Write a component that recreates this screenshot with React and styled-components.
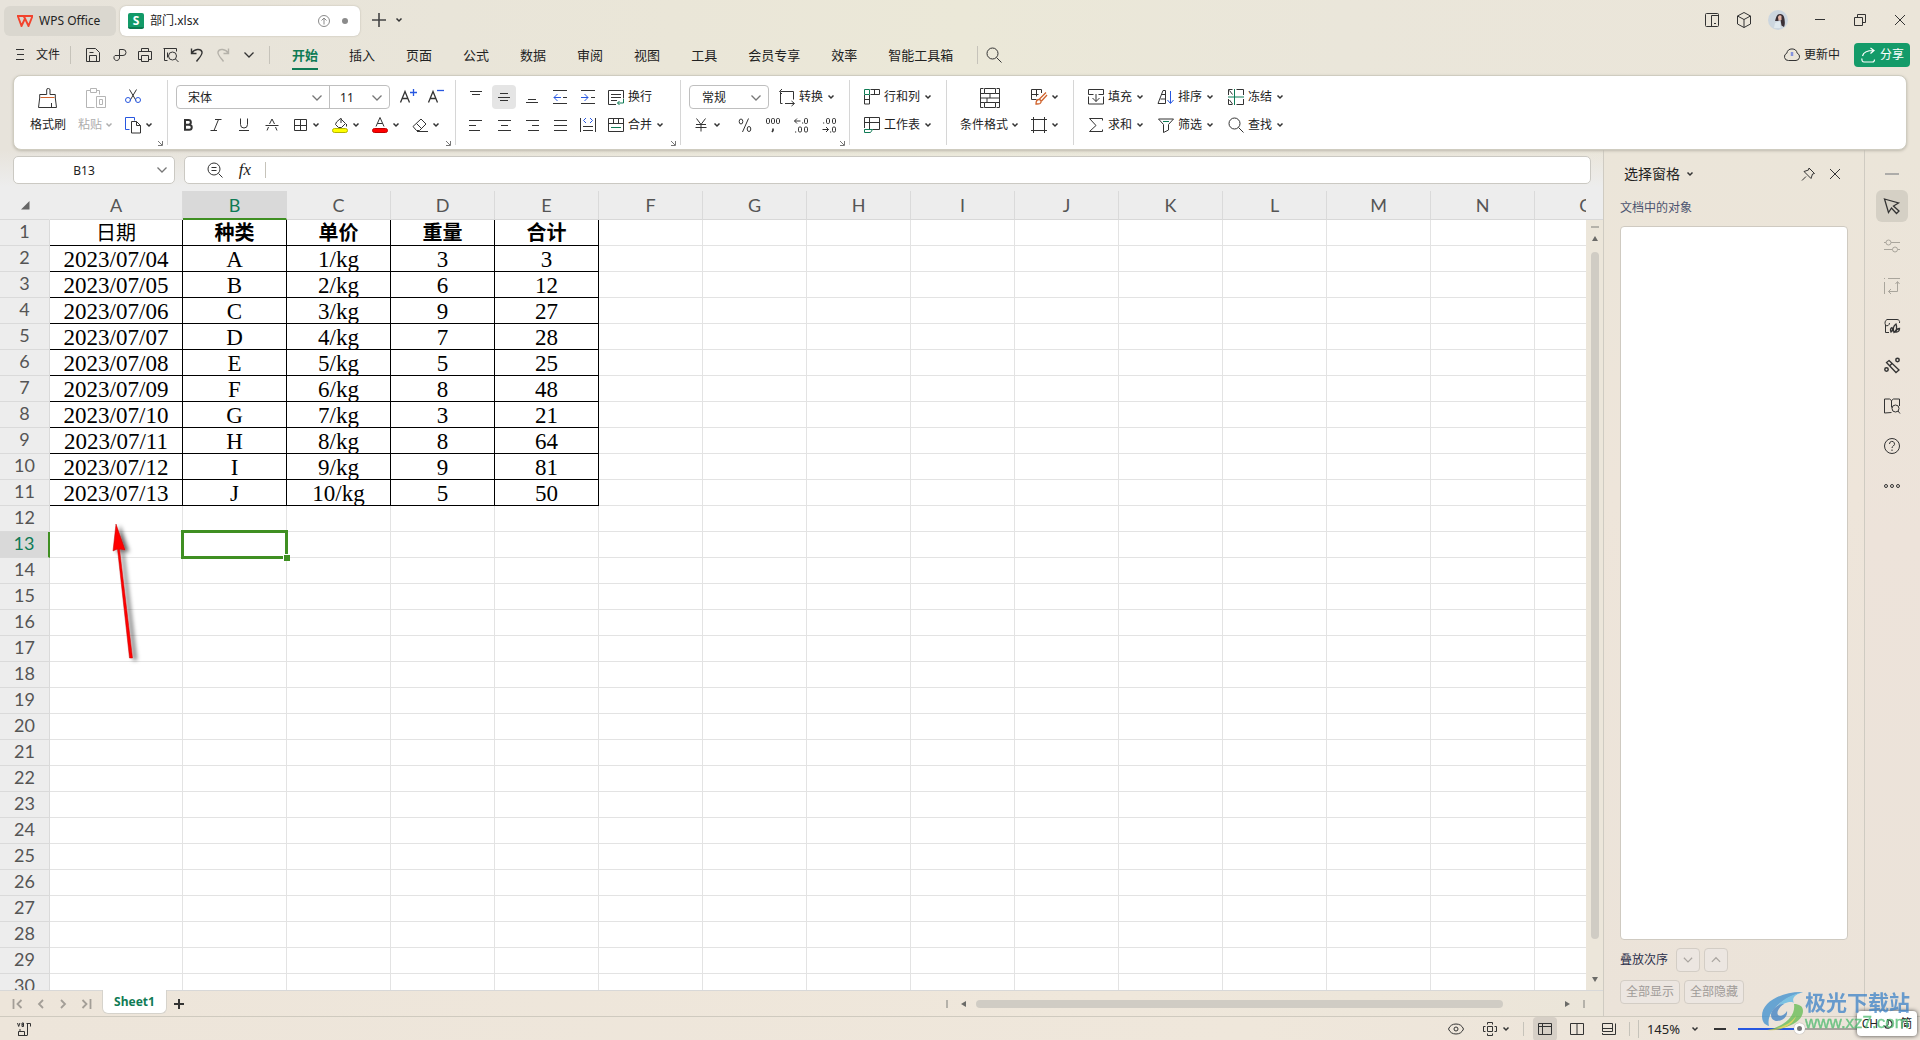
import React, { useState } from "react";
import styled, { createGlobalStyle, css } from "styled-components";

const INK = "#333333";
const GREEN = "#0f7b55";
const BLUE = "#2757e0";
const ORANGE = "#d0642e";
const UI_FONT = `"Noto Sans", "Noto Sans CJK SC", sans-serif`;

const GlobalStyle = createGlobalStyle`
  * { box-sizing: border-box; }
  body { margin: 0; overflow: hidden; font-family: ${UI_FONT}; color: #222; }
  button, input, select { font: inherit; color: inherit; }
  button { padding: 0; border: 0; background: none; cursor: default; }
  table { border-collapse: separate; border-spacing: 0; }
`;

/* ---------- icons ---------- */

const Glyph = styled.svg`
  display: block;
  flex: none;
  fill: none;
  stroke: ${(p) => p.$color || INK};
  stroke-width: ${(p) => p.$weight || 1};
`;

const Icon = ({ name, size = 24, color, weight }) => (
  <Glyph width={size} height={size} viewBox="0 0 24 24" $color={color} $weight={weight} aria-hidden="true">
    {ICONS[name]}
  </Glyph>
);

const P = (d, extra) => <path d={d} {...extra} />;

const ICONS = {
  menu: P("M4 6.5h8M5 11.5h7M4 16.5h8"),
  save: (
    <>
      {P("M5.5 5.5h9l4 4v9h-13z")}
      {P("M8.5 18.5v-6h7v6M8.5 9.5h4")}
    </>
  ),
  pdf: P("M8 12.500h8a3 3 0 0 0 0-6h-3.500v8.500a2.800 2.800 0 1 1-4.500-2.500"),
  print: (
    <>
      {P("M8.500 8.500v-3h7v3M8.500 16.500h-3v-8h13v8h-3M8.500 12.500h7v6h-7z")}
    </>
  ),
  preview: (
    <>
      {P("M8.500 17.500h-3v-12h12v3M4.500 5.500h3M8.500 9.500v5")}
      <circle cx="13.500" cy="13" r="4" />
      {P("M16.500 16l3 3")}
    </>
  ),
  undo: P("M6.500 5.500v5h5M7 10c2-4 9-5 10-1 .6 3-3 6-5.500 9.500", { strokeWidth: 1.4 }),
  redo: P("M17.500 5.500v5h-5M17 10c-2-4-9-5-10-1-.6 3 3 6 5.500 9.500", { strokeWidth: 1.4 }),
  down: P("M7.500 9.500l4.500 4.500 4.500-4.500", { strokeWidth: 1.3 }),
  up: P("M7.500 14l4.500-4.500 4.500 4.500", { strokeWidth: 1.3 }),
  search: (
    <>
      <circle cx="10.500" cy="10.500" r="5.500" />
      {P("M14.500 14.500l5 5")}
    </>
  ),
  plus: P("M12 5v14M5 12h14", { strokeWidth: 1.600 }),
  upload: (
    <>
      <circle cx="12" cy="12" r="5.500" />
      {P("M12 15.500v-6M9.500 11.500l2.500-2.500 2.500 2.500")}
    </>
  ),
  dual: (
    <>
      <rect x="5.500" y="5.500" width="13" height="13" rx="1" />
      {P("M11.500 18.500v-11h7M14 15.500h2")}
    </>
  ),
  cube: P("M12 4.500l6.500 3.500v8l-6.500 3.500-6.500-3.500v-8zM5.500 8l6.500 3.500 6.500-3.500M12 11.500v8"),
  minimize: P("M7 11.500h10"),
  restore: P("M6.500 9.500h8v8h-8zM9.500 9.500v-3h8v8h-3"),
  close: P("M7 7l10 10M17 7l-10 10"),
  cloud: (
    <>
      {P("M8.500 17.500h7.500a3.800 3.800 0 0 0 1.200-7.300 5.300 5.300 0 0 0-10.400 0 3.800 3.800 0 0 0 1.700 7.300z")}
      {P("M12 9v4", { stroke: "#8493dd", strokeWidth: 2.500 })}
    </>
  ),
  share: (
    <>
      {P("M6 15.500c-.5 2 .5 3.500 2 3.500h8.500c1.200 0 2-1 2-2.500M6.500 13c1-4 5-5.500 11-5.500M14.500 5l3.500 2.500-3.500 3", { strokeWidth: 1.2 })}
    </>
  ),
  brush: (
    <>
      {P("M12.500 2.500a1.500 1.500 0 0 0-1.800 1.500v4.500h-7v3.500l-1.200 9.500h18l-1.200-9.500v-3.500h-5.300v-4.500a1.500 1.500 0 0 0-1.500-1.500z")}
      {P("M4.500 11.500h14", { stroke: ORANGE })}
      {P("M15.500 17v4.500")}
    </>
  ),
  paste: (
    <>
      {P("M6.500 4.500h-4v17h8M15.500 8.500v-4h-3M6.500 2.500h6v4h-6zM12.500 10.500h9v11h-9zM15.500 13.500h3v5h-3z")}
    </>
  ),
  cut: (
    <>
      {P("M8.500 4.500l6.500 11M15.500 4.500l-6.500 11")}
      <circle cx="7" cy="15" r="2.500" stroke={BLUE} />
      <circle cx="17" cy="15" r="2.500" stroke={BLUE} />
    </>
  ),
  copy: (
    <>
      {P("M8.500 16.500h-4v-12h9v3", { stroke: BLUE })}
      {P("M10.500 8.500h5l4 4v7.500h-9zM15.500 8.500v4h4")}
    </>
  ),
  bigger: (
    <>
      {P("M5.500 17.500l4.500-11 4.500 11M7 13.500h6", { strokeWidth: 1.300 })}
      {P("M15 7.500h7M18.500 4v7", { stroke: BLUE, strokeWidth: 1.300 })}
    </>
  ),
  smaller: (
    <>
      {P("M5.500 17.500l4.500-11 4.500 11M7 13.500h6", { strokeWidth: 1.300 })}
      {P("M14 5.500h7", { stroke: BLUE, strokeWidth: 1.300 })}
    </>
  ),
  bold: P("M9 7h3.500a2.300 2.300 0 0 1 0 4.700H9zM9 11.700h4.200a2.500 2.500 0 0 1 0 5.100H9z", { strokeWidth: 2 }),
  italic: P("M11 6.500h6.500M6.500 17.500h6.500M14.500 6.500l-4.500 11"),
  underline: P("M8.500 5.500v6a3.500 3.500 0 0 0 7 0v-6M7 17.500h10"),
  strike: P("M5.500 12.500h13M9.500 11l2.500-5 2.500 5M8.500 14l-1.500 3.500M15.500 14l1.500 3.500"),
  borders: P("M6.500 6.500h12v11h-12zM12.500 6.500v11M6.500 12.500h12"),
  fill: (
    <>
      {P("M8.500 9l4-3.500 5 5-4 4h-3l-3-3zM13 5v5M18.500 11v2.500")}
      <rect x="4.500" y="15.500" width="15" height="4" rx="2" fill="#ffff00" stroke="#b5b500" />
    </>
  ),
  fontColor: (
    <>
      {P("M8 13.500l4-9 4 9M9.500 10.500h5")}
      <rect x="4.500" y="15.500" width="15" height="4" rx="2" fill="#ff0000" stroke="#c00000" />
    </>
  ),
  eraser: P("M5 13.500l8-7.500 5 5-6.500 6.500h-3zM8.500 10.500l5 5M9 18.500h11"),
  alignTop: P("M6 6.500h12M8 9.500h8"),
  alignMiddle: P("M8 8.500h8M6 12.500h12M8 15.500h8"),
  alignBottom: P("M8 14.500h8M6 17.500h12"),
  outdent: (
    <>
      {P("M5 5.500h14M15 12.500h4M5 18.500h14")}
      {P("M13 12.500h-7M9.500 9l-3.500 3.500 3.500 3.500", { stroke: BLUE })}
    </>
  ),
  indent: (
    <>
      {P("M5 5.500h14M15 12.500h4M5 18.500h14")}
      {P("M5 12.500h7M8.500 9l3.500 3.500-3.500 3.500", { stroke: BLUE })}
    </>
  ),
  left: P("M5 7.500h13M5 12.500h7M5 17.500h11"),
  center: P("M6 7.500h13M9 12.500h7M6 17.500h13"),
  right: P("M6 7.500h13M12 12.500h7M8 17.500h11"),
  justify: P("M6 7.500h13M6 12.500h13M6 17.500h13"),
  distribute: (
    <>
      {P("M4.500 5v14M19.500 5v14M7 13.500h10M7 17.500h10")}
      {P("M10 5l-2.500 2.500 2.500 2.500M14 5l2.500 2.500-2.500 2.500", { stroke: BLUE })}
    </>
  ),
  wrap: (
    <>
      {P("M12 19.500h-7.500v-14h15v8M7 9.500h10M7 12.500h10M7 15.500h6")}
      {P("M19.500 14v4h-6M15.500 16l-2 2 2 2", { stroke: GREEN })}
    </>
  ),
  merge: (
    <>
      {P("M4.500 5.500h15v13h-15zM4.500 10.500h15M9.500 5.500v5M14.500 5.500v5")}
      {P("M7 14.500h10", { stroke: GREEN })}
    </>
  ),
  convert: P("M7.500 18.500h-2v-12h13v8M7 4l-2.500 2.500 2.500 2.500M10 18.500h9M16.500 16l3 2.500-3 2.500"),
  yen: P("M7.500 5.500l4.500 6 4.500-6M7 11.500h10M6.500 14.500h11M12 11.500v7"),
  percent: (
    <>
      <ellipse cx="8" cy="8.500" rx="1.800" ry="2.500" />
      <ellipse cx="16" cy="16" rx="1.800" ry="2.500" />
      {P("M15.500 5.500l-6 13.500")}
    </>
  ),
  thousands: (
    <>
      <rect x="5.500" y="5.500" width="3" height="5" rx="1.200" />
      <rect x="10.500" y="5.500" width="3" height="5" rx="1.200" />
      <rect x="15.500" y="5.500" width="3" height="5" rx="1.200" />
      {P("M12 15.500v2l-1 1.500", { strokeWidth: 1.600 })}
    </>
  ),
  decInc: (
    <>
      {P("M5.500 8h6M8 5.500l-2.500 2.500 2.500 2.500M13 10h1.200M6 19h1.200")}
      <rect x="15.500" y="5.500" width="3" height="5" rx="1.200" />
      <rect x="9.500" y="14" width="3" height="5" rx="1.200" />
      <rect x="15.500" y="14" width="3" height="5" rx="1.200" />
    </>
  ),
  decDec: (
    <>
      {P("M5.500 16.500h6M9 14l2.500 2.500-2.500 2.500M13 19h1.200M6 10h1.200")}
      <rect x="9.500" y="5.500" width="3" height="5" rx="1.200" />
      <rect x="15.500" y="5.500" width="3" height="5" rx="1.200" />
      <rect x="15.500" y="14" width="3" height="5" rx="1.200" />
    </>
  ),
  rowsCols: (
    <>
      {P("M10.500 4.500h9v5h-9M14.500 4.500v5M4.500 10v9h5v-9M4.500 14.500h5")}
      {P("M4.500 4.500h5v5h-5z", { stroke: GREEN })}
    </>
  ),
  worksheet: (
    <>
      {P("M4.500 15v-10.500h15v12h-7M4.500 9.500h15M9.500 4.500v12")}
      {P("M4.500 16.500h8l-2 3h-6z", { stroke: GREEN })}
    </>
  ),
  condFormat: P("M5.500 2.500h-3v19h3M18.500 2.500h3v19h-3M6.500 2.500h11v5h-11zM6.500 16.500h11v5h-11zM2.500 7.500h4M17.500 7.500h4M2.500 12h19M12 7.500v4.500M2.500 16.500h4M17.500 16.500h4M9 12v4.500"),
  cellStyle: (
    <>
      {P("M14.500 8v-3.500h-10v10h5M9.500 4.500v7M4.500 9.500h7")}
      {P("M9 19c0-3 1-4.500 3-4.500s3 2.500 1 4c-1 .6-2.500.5-4 .5zM12.500 14l6.500-6.500M14.500 16l5.500-6", { stroke: ORANGE, strokeWidth: 1.300 })}
    </>
  ),
  frame: P("M6.500 4v16M17.500 4v16M4 6.500h16M4 17.500h16"),
  fillDown: P("M9.500 9.500h-5v-5h15v5h-5M4.500 11.500v7.500h15v-7.500M12 9v7.500M8.500 13l3.500 3.500 3.500-3.500"),
  sum: P("M18.500 7.500v-2h-13l6.500 7-6.500 6h13v-2"),
  sort: (
    <>
      {P("M4 18.500l5-13h2.500v13M4 18.500h7.500M7.500 9.500h4M6.500 14h5")}
      {P("M16.500 6v12M13.500 15l3 3.500 3-3.500", { stroke: BLUE })}
    </>
  ),
  filter: (
    <>
      {P("M9.500 19.500v-8l-5-5.500h15l-5 5.500v5.500z")}
      {P("M9 8.500h6", { stroke: GREEN })}
    </>
  ),
  freeze: (
    <>
      {P("M4.500 10v-5.500h4M12.500 4.500h7v5.500M4.500 14v5.500h4M12.500 19.500h7v-5.500M5.500 5.500l3 4M5.500 15l3 4")}
      {P("M10.500 4v16M4 12h16", { stroke: GREEN })}
    </>
  ),
  zoomOut: (
    <>
      <circle cx="11" cy="11" r="6" />
      {P("M8.500 9.500h5M8.500 12.500h5M15.500 15.500l4 4")}
    </>
  ),
  pin: P("M6 18.500l4-4M13 6l5.500 5.500-2 .5-1.500 4.500-7-7 4.500-1.500z"),
  dash: P("M5 12h14", { strokeWidth: 1.500 }),
  cursor: P("M4.500 5l14 4-5 3 5.500 5-2.500 2.500-5-5.500-3 4.500z", { strokeWidth: 1.300 }),
  sliders: (
    <>
      {P("M4 8.500h2M11 8.500h9M4 15.500h8.500M17.500 15.500h2.500")}
      <circle cx="8.500" cy="8.500" r="2.500" />
      <circle cx="15" cy="15.500" r="2.500" />
    </>
  ),
  crop: P("M4.500 8v12M8 4.500h12M4.500 4v1M17.500 8v9.500h-9M15.500 10l2-2.500 2 2.500M11 15l-2.500 2.500 2.500 2.500"),
  stylePanel: (
    <>
      {P("M9 18.500h-3.500v-7.500c-1-2-.5-4.500 1.500-5.500h10c2 0 3 1.500 2.500 3.500M5.500 11.500c2 1 4-.5 4-2.500")}
      {P("M11 18c-1-2.500 0-4 1-4.500 1 1.500 1 3-1 4.500zM14 18.500c-1.500-4 0-7 2-8.500 1 2.500 1 6-2 8.500zM15.500 18c1-3 2.500-3.500 4-3.500 0 2-1 4-4 3.500z", { strokeWidth: 1.300 })}
    </>
  ),
  wand: (
    <>
      {P("M9 6.500l10 9.500-3 2.500-9.500-10zM9.500 12l2.500-2.500", { strokeWidth: 1.300 })}
      <circle cx="17.500" cy="6" r="1.700" strokeWidth="1.500" />
      <circle cx="6.500" cy="15.500" r="1.700" strokeWidth="1.500" />
    </>
  ),
  book: (
    <>
      {P("M11.500 18.500l-7 .5v-14h5l2 1.500 2-1.500h6v7M11.500 6.500v7")}
      <circle cx="15.500" cy="14.500" r="3.500" />
      {P("M18 17l2 2.500")}
    </>
  ),
  help: (
    <>
      <circle cx="12" cy="12" r="7.500" />
      {P("M9.500 10a2.500 2.500 0 1 1 3.800 2c-.8.6-1.300 1-1.300 2M12 15.500v1.500")}
    </>
  ),
  more: (
    <>
      <circle cx="6" cy="12" r="1.500" />
      <circle cx="12" cy="12" r="1.500" />
      <circle cx="18" cy="12" r="1.500" />
    </>
  ),
  first: P("M6.500 7v10M14.500 8l-4 4 4 4", { strokeWidth: 1.800 }),
  prev: P("M14 8l-4 4 4 4", { strokeWidth: 1.800 }),
  next: P("M10 8l4 4-4 4", { strokeWidth: 1.800 }),
  last: P("M17.500 7v10M9.500 8l4 4-4 4", { strokeWidth: 1.800 }),
  addSheet: P("M12 7v10M7 12h10", { strokeWidth: 2 }),
  macro: (
    <>
      {P("M5.500 6l1.200 3.500 1.200-3.500M10 9.500v-3.500h1.500v3.500zM10 7.700h2M14.500 6.500h4v3M15.500 6.500v11.500M6.500 18.500h9M6.500 14.500h6v4h-6zM8 14.500v-2.500")}
    </>
  ),
  eye: (
    <>
      {P("M4.500 12c1.500-3.500 4-5 7.500-5s6 1.500 7.500 5c-1.500 3.500-4 5-7.500 5s-6-1.500-7.500-5z")}
      <circle cx="12" cy="12" r="2" />
    </>
  ),
  target: P("M9.500 9.500h5v5h-5zM9.500 7.500v-2h5v2M9.500 16.500v2h5v-2M7.500 9.500h-2v5h2M16.500 9.500h2v5h-2"),
  gridView: P("M5.500 6.500h13v11h-13zM9.500 6.500v11M5.500 9.500h13"),
  pageView: P("M5.500 6.500h13v11h-13zM12 6.500v11"),
  readView: P("M5.500 6.500h10v8h-10zM18.500 6.500v11h-13v-1.500M5.500 11.500h10"),
  minus: P("M6 12h12", { strokeWidth: 2 }),
  moon: P("M10 5.500c7 1 9 9 3 12-3 1.500-6 .5-7.500-2 5 .5 7-4 4.500-10z", { strokeWidth: 1.800 }),
};

const Chevron = ({ color = INK }) => (
  <Glyph width="8" height="8" viewBox="0 0 8 8" $color={color} $weight={1.5} aria-hidden="true">
    <path d="M1.500 2.500L4 5l2.500-2.500" />
  </Glyph>
);

const Triangle = ({ dir }) => {
  const d = { up: "M4 1l3 5H1z", down: "M4 7L1 2h6z", left: "M1 4l5-3v6z", right: "M7 4L2 1v6z" }[dir];
  return (
    <Glyph width="8" height="8" viewBox="0 0 8 8" $color="none" aria-hidden="true">
      <path d={d} fill="#6b6b68" />
    </Glyph>
  );
};

const WpsLogo = () => (
  <Glyph width="16" height="12" viewBox="0 0 16 12" $color="#f2432d" $weight={1.9}>
    <path d="M0 1h15.500L11.500 11 8 3.500 4.500 11 1 1.500M8 3.500L6.500 1" />
  </Glyph>
);

/* ---------- frame ---------- */

const Window = styled.div`
  position: relative;
  display: flex;
  flex-direction: column;
  height: 100vh;
  overflow: hidden;
  background: linear-gradient(90deg, #e7e3db 0, #eae6d8 35%, #ebe8d8 50%, #eae6da 70%, #ebe5d9 100%);
  font-size: 12px;
  line-height: 16px;
`;

const TitleBar = styled.header`
  display: flex;
  align-items: flex-start;
  height: 37px;
  padding: 6px 0 0 4px;
`;

const DocTab = styled.button`
  display: flex;
  align-items: center;
  gap: 6px;
  height: 30px;
  border-radius: 6px;
  margin-right: 4px;
  text-align: left;
  ${(p) =>
    p.$active
      ? css`width: 240px; padding: 0 12px 0 8px; background: #fff; box-shadow: 0 0 2px #b7b3a8;`
      : css`width: 112px; padding: 0 13px; background: #dad7cf;`}
`;

const Grow = styled.span`
  flex: 1;
`;

const SheetBadge = styled.span`
  width: 16px;
  height: 16px;
  border-radius: 2px;
  background: #129a68;
  border-bottom: 2px solid #0b7a50;
  color: #fff;
  font-size: 12px;
  line-height: 15px;
  font-weight: 700;
  text-align: center;
`;

const Dot = styled.span`
  width: 6px;
  height: 6px;
  border-radius: 50%;
  background: #8b8b8b;
`;

const TitleTools = styled.div`
  display: flex;
  align-items: center;
  height: 28px;
`;

const ToolButton = styled.button`
  display: flex;
  align-items: center;
  justify-content: center;
  flex: none;
  width: ${(p) => p.$w || 24}px;
  height: 24px;
  border-radius: 4px;
  background: ${(p) => (p.$active ? "#e5e5e5" : "transparent")};
`;

const AvatarButton = styled(ToolButton)`
  margin: 0 10px 0 2px;
`;

const Avatar = () => (
  <svg width="20" height="20" viewBox="0 0 20 20" aria-hidden="true">
    <circle cx="10" cy="10" r="10" fill="#ccd6df" />
    <path d="M7 11c1-2 1-7 5-7 3-.3 4 2 4.500 5 .5 4 .5 6-.5 8l-2.500-1.500-1-5.500-3 1z" fill="#3a3036" />
    <path d="M10 7c1-2 2.500-2 3.500-1v4l-3 .5z" fill="#e7b7a8" />
    <path d="M7 13l5-2 .5 7H6z" fill="#dfe8ee" />
  </svg>
);

const MenuBar = styled.nav`
  display: flex;
  align-items: center;
  height: 38px;
  padding: 0 10px 2px 12px;
`;

const FileButton = styled.button`
  display: flex;
  align-items: center;
  height: 24px;
`;

const Rule = styled.span`
  flex: none;
  width: 1px;
  height: ${(p) => p.$h || 18}px;
  margin: 0 ${(p) => p.$m || 0}px;
  background: #c6c3ba;
`;

const QuickTools = styled.div`
  display: flex;
  gap: 2px;
`;

const MenuTabs = styled.div`
  display: flex;
  gap: 31px;
  margin: 0 20px 0 14px;
`;

const MenuTab = styled.button`
  height: 26px;
  margin-top: 4px;
  padding-bottom: 2px;
  font-size: 13px;
  line-height: 20px;
  border-bottom: 2px solid ${(p) => (p.$active ? GREEN : "transparent")};
  color: ${(p) => (p.$active ? GREEN : "#222")};
  font-weight: ${(p) => (p.$active ? 700 : 400)};
`;

const SyncState = styled.button`
  display: flex;
  align-items: center;
  margin-right: 14px;
`;

const ShareButton = styled.button`
  display: flex;
  align-items: center;
  height: 24px;
  padding: 0 6px 0 2px;
  border-radius: 4px;
  background: #149b69;
  color: #fff;
`;

/* ---------- ribbon ---------- */

const Ribbon = styled.section`
  display: flex;
  height: 75px;
  margin: 0 13px;
  padding: 4px 0;
  background: #fff;
  border: 1px solid #cfccc0;
  border-radius: 8px;
  box-shadow: 0 1px 3px #bdb9ad;
  z-index: 1;
`;

const Group = styled.div`
  position: relative;
  display: flex;
  padding: 5px ${(p) => p.$r}px 0 ${(p) => p.$l}px;
  border-right: ${(p) => (p.$last ? 0 : 1)}px solid #d6d6d6;
`;

const Rows = styled.div`
  display: flex;
  flex-direction: column;
  gap: 4px;
`;

const Row = styled.div`
  display: flex;
  align-items: center;
  gap: ${(p) => p.$gap ?? 4}px;
  height: 24px;
`;

const LauncherButton = styled.button`
  position: absolute;
  right: 3px;
  bottom: -2px;
`;

const Launcher = ({ label }) => (
  <LauncherButton aria-label={label}>
    <Glyph width="8" height="8" viewBox="0 0 8 8" $color="#777">
      <path d="M2 2l4 4M6.500 2v4.500h-4.500" />
    </Glyph>
  </LauncherButton>
);

const BigButton = styled.button`
  display: flex;
  flex-direction: column;
  align-items: center;
  gap: 8px;
  height: 52px;
  padding-top: 1px;
  margin-right: ${(p) => p.$gap || 0}px;
  color: ${(p) => (p.disabled ? "#adadad" : "#222")};
`;

const BigLabel = styled.span`
  display: flex;
  align-items: center;
  gap: 3px;
  line-height: 14px;
`;

const ActionButton = styled.button`
  display: flex;
  align-items: center;
  height: 24px;
  svg + svg { margin-right: 4px; }
  span { margin-right: 4px; }
`;

const Action = ({ icon, text, menu, label }) => (
  <ActionButton aria-label={label}>
    <Icon name={icon} />
    {text && <span>{text}</span>}
    {menu && <Chevron />}
  </ActionButton>
);

const Tool = ({ icon, label, active, ...rest }) => (
  <ToolButton aria-label={label} title={label} $active={active}>
    <Icon name={icon} {...rest} />
  </ToolButton>
);

const FontBoxes = styled.div`
  display: flex;
  height: 24px;
  border: 1px solid #bfbfbf;
  border-radius: 4px;
  margin-right: 1px;
`;

const PickWrap = styled.label`
  display: grid;
  grid-template-columns: 1fr 24px;
  align-items: center;
  width: ${(p) => p.$w}px;
  height: ${(p) => (p.$boxed ? 24 : 22)}px;
  border: ${(p) => (p.$boxed ? "1px solid #bfbfbf" : "0")};
  border-radius: 4px;
  & + & { border-left: 1px solid #bfbfbf; border-radius: 0; }
  svg { grid-area: 1 / 2; pointer-events: none; }
`;

const Pick = styled.select`
  grid-area: 1 / 1 / 2 / 3;
  width: 100%;
  height: 100%;
  padding: 0 0 0 ${(p) => p.$pad}px;
  border: 0;
  background: transparent;
  appearance: none;
  outline: none;
`;

const Dropdown = ({ label, value, width, pad, boxed }) => (
  <PickWrap $w={width} $boxed={boxed}>
    <Pick aria-label={label} $pad={pad} defaultValue={value}>
      <option>{value}</option>
    </Pick>
    <Icon name="down" color="#777" />
  </PickWrap>
);

/* ---------- body ---------- */

const Body = styled.main`
  display: flex;
  flex: 1;
  min-height: 0;
`;

const Work = styled.div`
  display: flex;
  flex-direction: column;
  flex: 1;
  min-width: 0;
`;

const FormulaBar = styled.div`
  display: flex;
  gap: 9px;
  height: 41px;
  padding: 6px 12px 7px 13px;
  background: linear-gradient(180deg, rgba(237, 237, 237, 0) 0, #ededed 90%);
`;

const BarBox = styled.div`
  display: flex;
  align-items: center;
  background: #fff;
  border: 1px solid #cbc9c3;
  border-radius: 5px;
  ${(p) => (p.$w ? css`width: ${p.$w}px;` : css`flex: 1; padding-left: 18px;`)}
`;

const BarInput = styled.input`
  flex: 1;
  min-width: 0;
  height: 24px;
  border: 0;
  outline: none;
  background: transparent;
  text-align: ${(p) => p.$align || "left"};
  padding-left: ${(p) => p.$pad || 0}px;
`;

const Fx = styled.button`
  width: 28px;
  margin: 0 6px 0 4px;
  font: italic 17px/22px "Liberation Serif", serif;
`;

const SheetArea = styled.div`
  display: flex;
  flex: 1;
  min-height: 0;
`;

const GridView = styled.div`
  flex: 1;
  min-width: 0;
  overflow: hidden;
  background: #fff;
`;

const Grid = styled.table`
  table-layout: fixed;
  width: 1639px;
`;

const ColHead = styled.th`
  height: 29px;
  padding: 0;
  background: ${(p) => (p.$active ? "#d9d9d9" : "#ededed")};
  border-right: 1px solid ${(p) => (p.$active ? "#d9d9d9" : "#dadada")};
  border-bottom: ${(p) => (p.$active ? "2px solid #3f8f22" : "1px solid #d8d8d8")};
  color: ${(p) => (p.$active ? GREEN : "#555")};
  font: 400 18px/24px Lato, sans-serif;
`;

const Corner = styled(ColHead)`
  border-right-color: #ededed;
  svg { display: block; margin: 0 0 0 20px; }
`;

const RowHead = styled.th`
  height: 26px;
  padding: 0 0 3px;
  background: ${(p) => (p.$active ? "#d9d9d9" : "#ededed")};
  border-right: ${(p) => (p.$active ? "2px solid #3f8f22" : "1px solid #dadada")};
  border-bottom: 1px solid #dadada;
  color: ${(p) => (p.$active ? GREEN : "#555")};
  font: 400 18px/22px Lato, sans-serif;
`;

const Cell = styled.td`
  position: relative;
  height: 26px;
  padding: 2px 0 0;
  border-right: 1px solid ${(p) => (p.$ruled ? "#000" : "#e3e3e3")};
  border-bottom: 1px solid ${(p) => (p.$ruled ? "#000" : "#e3e3e3")};
  color: #000;
  font-family: "Liberation Serif", "Noto Sans CJK SC", serif;
  font-size: ${(p) => (p.$head ? 20 : 23)}px;
  line-height: 23px;
  font-weight: ${(p) => (p.$bold ? 700 : 400)};
  text-align: center;
  white-space: nowrap;
  ${(p) =>
    p.$selected &&
    css`
      &::before { content: ""; position: absolute; inset: -2px; border: 3px solid #3f8f22; z-index: 1; }
      &::after { content: ""; position: absolute; right: -4px; bottom: -4px; width: 6px; height: 6px;
        background: #3f8f22; border: 1px solid #fff; border-width: 1px 0 0 1px; z-index: 2; }
    `}
`;

const Arrow = styled.svg`
  position: absolute;
  left: 54px;
  top: 18px;
  z-index: 3;
  overflow: visible;
`;

const VScroll = styled.div`
  display: flex;
  flex-direction: column;
  align-items: center;
  width: 17px;
  padding-bottom: 7px;
  background: #ece6da;
`;

const VScrollHead = styled.span`
  width: 17px;
  height: 29px;
  margin-bottom: 6px;
  background: #ededed;
  border-bottom: 1px solid #d8d8d8;
`;

const SplitMark = styled.span`
  flex: none;
  width: ${(p) => (p.$vertical ? 2 : 8)}px;
  height: ${(p) => (p.$vertical ? 8 : 2)}px;
  background: #b5b2aa;
`;

const VTrack = styled.div`
  display: flex;
  flex: 1;
  width: 8px;
  margin: 9px 0 0;
`;

const Thumb = styled.span`
  border-radius: 4px;
  background: #d0ccc4;
  width: ${(p) => p.$w};
  height: ${(p) => p.$h};
`;

const ScrollButton = styled.button`
  display: flex;
  margin: ${(p) => p.$m || "0"};
`;

const SheetBar = styled.div`
  display: flex;
  align-items: center;
  height: 26px;
  border-top: 1px solid #d8d8d8;
  padding: 0 18px 0 8px;
  background: linear-gradient(90deg, #ede5da, #efe7db 70%, #ebe5d9);
`;

const SheetTab = styled.button`
  align-self: flex-start;
  width: 65px;
  height: 24px;
  margin: -1px 0 0 6px;
  background: #fff;
  border: 1px solid #d6d3cc;
  border-top: 0;
  border-radius: 0 0 6px 6px;
  color: ${GREEN};
  font-weight: 700;
`;

const HScroll = styled.div`
  display: flex;
  align-items: center;
  gap: 8px;
  flex: 0 0 41%;
  margin-right: -8px;
`;

const HTrack = styled.div`
  flex: 1;
  display: flex;
  height: 8px;
`;

/* ---------- side panel ---------- */

const Panel = styled.aside`
  display: flex;
  flex-direction: column;
  width: 261px;
  padding: 12px 16px 12px 16px;
  border-left: 1px solid #cfcbc2;
  background: linear-gradient(180deg, #ebe5d9, #eee5da 40%, #ebe3d9);
`;

const PanelTitle = styled.div`
  display: flex;
  align-items: center;
  height: 24px;
  padding: 0 0 0 4px;
  font-size: 14px;
  line-height: 20px;
`;

const PanelCaption = styled.span`
  margin: 14px 0 10px;
  color: #4c5470;
`;

const ObjectList = styled.div`
  flex: 1;
  background: #fff;
  border: 1px solid #cfcac1;
  border-radius: 4px;
`;

const PanelRow = styled.div`
  display: flex;
  align-items: center;
  gap: 4px;
  height: 24px;
  margin-top: 8px;
`;

const PanelLabel = styled.span`
  margin-right: 4px;
  color: #2b2f4a;
`;

const PanelButton = styled.button`
  display: flex;
  align-items: center;
  justify-content: center;
  height: 24px;
  width: ${(p) => (p.$square ? 24 : 60)}px;
  border: 1px solid #d3cdc5;
  border-radius: 4px;
  background: #ece6e1;
  color: #a09b98;
`;

const Rail = styled.aside`
  display: flex;
  flex-direction: column;
  align-items: center;
  gap: 8px;
  width: 56px;
  padding: 16px 1px 0 0;
  border-left: 1px solid #cfcbc2;
  background: linear-gradient(180deg, #ebe5d9, #ede3da 45%, #ebe3d9);
`;

const RailButton = styled.button`
  display: flex;
  align-items: center;
  justify-content: center;
  width: 32px;
  height: 32px;
  border-radius: 6px;
  background: ${(p) => (p.$active ? "#d5d0c5" : "transparent")};
  &:first-child { height: 16px; }
`;

/* ---------- status bar ---------- */

const StatusBar = styled.footer`
  display: flex;
  align-items: center;
  height: 24px;
  padding: 0 36px 0 12px;
  border-top: 1px solid #cfcabf;
  background: linear-gradient(90deg, #ede5da, #efe7db 65%, #ebe3d9);
`;

const ViewButton = styled(ToolButton)`
  width: 24px;
  height: 24px;
  margin-right: 8px;
  background: ${(p) => (p.$active ? "#d6cfc6" : "transparent")};
`;

const ZoomLevel = styled.button`
  display: flex;
  align-items: center;
  gap: 11px;
  font-size: 13px;
  margin-right: 5px;
`;

const ZoomRange = styled.input`
  width: 122px;
  height: 12px;
  margin: 0 0 0 2px;
  appearance: none;
  background: linear-gradient(90deg, #2757e0 50%, #a8a49e 50%) center / 100% 2px no-repeat;
  &::-webkit-slider-thumb {
    appearance: none;
    width: 11px;
    height: 11px;
    border: 3px solid #fff;
    border-radius: 50%;
    background: #777;
    box-shadow: 0 0 1px #888;
  }
`;

const InputMethod = styled.div`
  position: absolute;
  right: 3px;
  bottom: 4px;
  display: flex;
  align-items: center;
  justify-content: center;
  gap: 3px;
  width: 60px;
  height: 25px;
  border-radius: 4px;
  background: #fff;
  box-shadow: 0 0 4px #444;
  z-index: 4;
`;

const Watermark = styled.div`
  position: absolute;
  right: 10px;
  bottom: 8px;
  display: flex;
  align-items: center;
  gap: 1px;
  opacity: 0.75;
  pointer-events: none;
  z-index: 5;
`;

const WatermarkName = styled.div`
  color: #3b82c8;
  font-size: 21px;
  line-height: 24px;
  font-weight: 700;
`;

const WatermarkSite = styled.div`
  color: #46b86a;
  font: 400 17px/18px "Liberation Sans", sans-serif;
  -webkit-text-stroke: 0.4px #46b86a;
`;

/* ---------- data ---------- */

const MENU = ["开始", "插入", "页面", "公式", "数据", "审阅", "视图", "工具", "会员专享", "效率", "智能工具箱"];
const COLS = "ABCDEFGHIJKLMNO".split("");
const HEAD = ["日期", "种类", "单价", "重量", "合计"];
const DATA = [
  ["2023/07/04", "A", "1/kg", 3, 3],
  ["2023/07/05", "B", "2/kg", 6, 12],
  ["2023/07/06", "C", "3/kg", 9, 27],
  ["2023/07/07", "D", "4/kg", 7, 28],
  ["2023/07/08", "E", "5/kg", 5, 25],
  ["2023/07/09", "F", "6/kg", 8, 48],
  ["2023/07/10", "G", "7/kg", 3, 21],
  ["2023/07/11", "H", "8/kg", 8, 64],
  ["2023/07/12", "I", "9/kg", 9, 81],
  ["2023/07/13", "J", "10/kg", 5, 50],
];
const TABLE = [HEAD, ...DATA];
const ROW_COUNT = 30;

const QUICK = [
  ["save", "保存"], ["pdf", "输出为PDF"], ["print", "打印"], ["preview", "打印预览"],
  ["undo", "撤销"], ["redo", "恢复"], ["down", "更多"],
];

const RAIL = [
  ["dash", "收起", "#999"], ["cursor", "选择"], ["sliders", "属性", "#a9a59c"], ["crop", "对象", "#a9a59c"],
  ["stylePanel", "样式"], ["wand", "美化"], ["book", "查阅"], ["help", "帮助"], ["more", "更多"],
];

/* ---------- sections ---------- */

function Header() {
  return (
    <TitleBar>
      <DocTab><WpsLogo />WPS Office</DocTab>
      <DocTab $active>
        <SheetBadge>S</SheetBadge>部门.xlsx<Grow />
        <Icon name="upload" color="#8b8b8b" size={24} /><Dot />
      </DocTab>
      <TitleTools>
        <ToolButton $w={30} aria-label="新建标签"><Icon name="plus" size={24} color="#444" /></ToolButton>
        <ToolButton $w={10} aria-label="标签列表"><Chevron /></ToolButton>
      </TitleTools>
      <Grow />
      <TitleTools>
        <Tool icon="dual" label="分屏" />
        <ToolButton $w={40} aria-label="应用"><Icon name="cube" /></ToolButton>
        <AvatarButton $w={24} aria-label="账户"><Avatar /></AvatarButton>
        <ToolButton $w={40} aria-label="最小化"><Icon name="minimize" /></ToolButton>
        <ToolButton $w={40} aria-label="还原"><Icon name="restore" /></ToolButton>
        <ToolButton $w={40} aria-label="关闭"><Icon name="close" /></ToolButton>
      </TitleTools>
    </TitleBar>
  );
}

function Menu() {
  const [tab, setTab] = useState("开始");
  return (
    <MenuBar>
      <FileButton><Icon name="menu" />文件</FileButton>
      <Rule $m={10} />
      <QuickTools>
        {QUICK.map(([icon, label]) => (
          <Tool key={icon} icon={icon} label={label} color={icon === "redo" ? "#b5b2aa" : INK} />
        ))}
      </QuickTools>
      <Rule $m={8} />
      <MenuTabs>
        {MENU.map((m) => (
          <MenuTab key={m} $active={m === tab} onClick={() => setTab(m)}>{m}</MenuTab>
        ))}
      </MenuTabs>
      <Rule $m={4} />
      <Tool icon="search" label="搜索" />
      <Grow />
      <SyncState><Icon name="cloud" />更新中</SyncState>
      <ShareButton><Icon name="share" color="#fff" />分享</ShareButton>
    </MenuBar>
  );
}

function RibbonBar() {
  return (
    <Ribbon>
      <Group $l={16} $r={10}>
        <BigButton $gap={12}><Icon name="brush" /><BigLabel>格式刷</BigLabel></BigButton>
        <BigButton $gap={8} disabled>
          <Icon name="paste" color="#b5b5b5" />
          <BigLabel>粘贴<Chevron color="#adadad" /></BigLabel>
        </BigButton>
        <Rows>
          <Row><Tool icon="cut" label="剪切" /></Row>
          <Row><Action icon="copy" label="复制" menu /></Row>
        </Rows>
        <Launcher label="剪贴板设置" />
      </Group>
      <Group $l={8} $r={8}>
        <Rows>
          <Row>
            <FontBoxes>
              <Dropdown label="字体" value="宋体" width={152} pad={11} />
              <Dropdown label="字号" value="11" width={60} pad={10} />
            </FontBoxes>
            <Tool icon="bigger" label="增大字号" />
            <Tool icon="smaller" label="减小字号" />
          </Row>
          <Row>
            <Tool icon="bold" label="加粗" />
            <Tool icon="italic" label="倾斜" />
            <Tool icon="underline" label="下划线" />
            <Tool icon="strike" label="删除线" />
            <Action icon="borders" label="边框" menu />
            <Action icon="fill" label="填充颜色" menu />
            <Action icon="fontColor" label="字体颜色" menu />
            <Action icon="eraser" label="清除" menu />
          </Row>
        </Rows>
        <Launcher label="字体设置" />
      </Group>
      <Group $l={8} $r={16}>
        <Rows>
          <Row>
            <Tool icon="alignTop" label="顶端对齐" />
            <Tool icon="alignMiddle" label="垂直居中" active />
            <Tool icon="alignBottom" label="底端对齐" />
            <Tool icon="outdent" label="减少缩进" />
            <Tool icon="indent" label="增加缩进" />
            <Action icon="wrap" text="换行" />
          </Row>
          <Row>
            <Tool icon="left" label="左对齐" />
            <Tool icon="center" label="水平居中" />
            <Tool icon="right" label="右对齐" />
            <Tool icon="justify" label="两端对齐" />
            <Tool icon="distribute" label="分散对齐" />
            <Action icon="merge" text="合并" menu />
          </Row>
        </Rows>
        <Launcher label="对齐设置" />
      </Group>
      <Group $l={8} $r={8}>
        <Rows>
          <Row $gap={6}>
            <Dropdown label="数字格式" value="常规" width={80} pad={12} boxed />
            <Action icon="convert" text="转换" menu />
          </Row>
          <Row>
            <Action icon="yen" label="货币" menu />
            <Grow />
            <Tool icon="percent" label="百分比" />
            <Tool icon="thousands" label="千位分隔" />
            <Tool icon="decInc" label="增加小数位" />
            <Tool icon="decDec" label="减少小数位" />
          </Row>
        </Rows>
        <Launcher label="数字设置" />
      </Group>
      <Group $l={10} $r={14}>
        <Rows>
          <Action icon="rowsCols" text="行和列" menu />
          <Action icon="worksheet" text="工作表" menu />
        </Rows>
      </Group>
      <Group $l={13} $r={10}>
        <BigButton $gap={8}><Icon name="condFormat" /><BigLabel>条件格式<Chevron /></BigLabel></BigButton>
        <Rows>
          <Action icon="cellStyle" label="单元格样式" menu />
          <Action icon="frame" label="格式" menu />
        </Rows>
      </Group>
      <Group $l={10} $r={0} $last>
        <Rows>
          <Row $gap={10}>
            <Action icon="fillDown" text="填充" menu />
            <Action icon="sort" text="排序" menu />
            <Action icon="freeze" text="冻结" menu />
          </Row>
          <Row $gap={10}>
            <Action icon="sum" text="求和" menu />
            <Action icon="filter" text="筛选" menu />
            <Action icon="search" text="查找" menu />
          </Row>
        </Rows>
      </Group>
    </Ribbon>
  );
}

function PointerArrow() {
  return (
    <Arrow width="40" height="140" viewBox="0 0 40 140" aria-hidden="true">
      <defs>
        <filter id="arrowShadow" x="-50%" y="-10%" width="250%" height="130%">
          <feDropShadow dx="4" dy="2" stdDeviation="2" floodColor="#000" floodOpacity="0.6" />
        </filter>
      </defs>
      <path filter="url(#arrowShadow)" fill="#ff0000" stroke="#c00000" strokeWidth="0.500"
        d="M12 0l9 26-5.500-1 13 109h-3L13.500 25 9 27z" />
    </Arrow>
  );
}

function Spreadsheet() {
  return (
    <SheetArea>
      <GridView>
        <Grid>
          <colgroup>
            <col style={{ width: 50 }} />
            {COLS.map((c) => <col key={c} style={{ width: c === "A" ? 133 : 104 }} />)}
          </colgroup>
          <thead>
            <tr>
              <Corner aria-label="全选">
                <svg width="10" height="10" viewBox="0 0 10 10"><path d="M9.500 1v8.500H1z" fill="#666" /></svg>
              </Corner>
              {COLS.map((c) => <ColHead key={c} scope="col" $active={c === "B"}>{c}</ColHead>)}
            </tr>
          </thead>
          <tbody>
            {Array.from({ length: ROW_COUNT }, (_, r) => (
              <tr key={r}>
                <RowHead scope="row" $active={r === 12}>{r + 1}</RowHead>
                {COLS.map((c, i) => (
                  <Cell
                    key={c}
                    $ruled={r < TABLE.length && i < HEAD.length}
                    $head={r === 0}
                    $bold={r === 0 && i > 0}
                    $selected={r === 12 && c === "B"}
                  >
                    {TABLE[r]?.[i]}
                    {r === 11 && c === "A" && <PointerArrow />}
                  </Cell>
                ))}
              </tr>
            ))}
          </tbody>
        </Grid>
      </GridView>
      <VScroll>
        <VScrollHead />
        <SplitMark />
        <ScrollButton aria-label="向上滚动" $m="7px 0 0"><Triangle dir="up" /></ScrollButton>
        <VTrack><Thumb $w="8px" $h="95%" /></VTrack>
        <ScrollButton aria-label="向下滚动"><Triangle dir="down" /></ScrollButton>
      </VScroll>
    </SheetArea>
  );
}

function SheetTabs() {
  const nav = [["first", "第一张"], ["prev", "上一张"], ["next", "下一张"], ["last", "最后一张"]];
  return (
    <SheetBar>
      {nav.map(([icon, label]) => (
        <ToolButton key={icon} $w={22} aria-label={label}><Icon name={icon} color="#a39e97" size={24} /></ToolButton>
      ))}
      <SheetTab>Sheet1</SheetTab>
      <Tool icon="addSheet" label="新建工作表" />
      <Grow />
      <HScroll>
        <SplitMark $vertical />
        <ScrollButton aria-label="向左滚动" $m="0 0 0 4px"><Triangle dir="left" /></ScrollButton>
        <HTrack><Thumb $w="91%" $h="8px" /></HTrack>
        <ScrollButton aria-label="向右滚动" $m="0 4px 0 0"><Triangle dir="right" /></ScrollButton>
        <SplitMark $vertical />
        <span />
      </HScroll>
    </SheetBar>
  );
}

function SelectionPanel() {
  return (
    <Panel>
      <PanelTitle>
        选择窗格
        <ToolButton $w={20} aria-label="窗格菜单"><Chevron /></ToolButton>
        <Grow />
        <ToolButton $w={28} aria-label="固定"><Icon name="pin" /></ToolButton>
        <ToolButton $w={26} aria-label="关闭窗格"><Icon name="close" /></ToolButton>
      </PanelTitle>
      <PanelCaption id="objects">文档中的对象</PanelCaption>
      <ObjectList role="listbox" aria-labelledby="objects" />
      <PanelRow>
        <PanelLabel>叠放次序</PanelLabel>
        <PanelButton $square aria-label="下移"><Icon name="down" size={22} color="#aaa5a0" weight={2} /></PanelButton>
        <PanelButton $square aria-label="上移"><Icon name="up" size={22} color="#aaa5a0" weight={2} /></PanelButton>
      </PanelRow>
      <PanelRow>
        <PanelButton>全部显示</PanelButton>
        <PanelButton>全部隐藏</PanelButton>
      </PanelRow>
    </Panel>
  );
}

function Status() {
  return (
    <StatusBar>
      <Tool icon="macro" label="宏" />
      <Grow />
      <ToolButton $w={44} aria-label="护眼模式"><Icon name="eye" /></ToolButton>
      <Action icon="target" label="阅读模式" menu />
      <Rule $h={14} $m={9} />
      <ViewButton $active aria-label="普通视图"><Icon name="gridView" /></ViewButton>
      <ViewButton aria-label="分页预览"><Icon name="pageView" /></ViewButton>
      <ViewButton aria-label="阅读视图"><Icon name="readView" /></ViewButton>
      <Rule $h={14} />
      <Rule $h={0} $m={8} />
      <ZoomLevel>145%<Chevron /></ZoomLevel>
      <ToolButton $w={32} aria-label="缩小"><Icon name="minus" /></ToolButton>
      <ZoomRange type="range" min="10" max="280" defaultValue="145" aria-label="缩放" />
      <Tool icon="minus" label="放大" />
    </StatusBar>
  );
}

export default function App() {
  return (
    <Window>
      <GlobalStyle />
      <Header />
      <Menu />
      <RibbonBar />
      <Body>
        <Work>
          <FormulaBar>
            <BarBox $w={162}>
              <BarInput aria-label="名称框" defaultValue="B13" $align="center" $pad={6} />
              <Tool icon="down" label="名称列表" color="#777" />
            </BarBox>
            <BarBox>
              <Tool icon="zoomOut" label="浏览公式" />
              <Fx aria-label="插入函数">fx</Fx>
              <Rule $h={16} />
              <BarInput aria-label="编辑栏" $pad={6} />
            </BarBox>
          </FormulaBar>
          <Spreadsheet />
          <SheetTabs />
        </Work>
        <SelectionPanel />
        <Rail>
          {RAIL.map(([icon, label, color]) => (
            <RailButton key={icon} aria-label={label} $active={icon === "cursor"}>
              <Icon name={icon} color={color} />
            </RailButton>
          ))}
        </Rail>
      </Body>
      <Status />
      <InputMethod><span>CH</span><Icon name="moon" size={16} /><span>简</span></InputMethod>
      <Watermark>
        <svg width="42" height="40" viewBox="0 0 42 40" aria-hidden="true">
          <path d="M41 1C22 0 0 10 0 25c0 6 3 9 7 10-3-12 8-26 34-34z" fill="#3b8fd0" />
          <path d="M41 1C26 4 16 12 12 20c10-10 18-10 20-8-3-5 2-9 9-11z" fill="#59b7e6" />
          <path d="M9 24c0-5 6-11 13-11-4 2-8 8-6 11 2 2 7 0 9-4 1 6-5 10-10 10-4 0-6-3-6-6z" fill="#3b7fc4" />
          <path d="M32 13c5 0 9 2 9 7 0 10-14 18-34 19 14-4 27-13 25-26z" fill="#62bb50" />
          <path d="M5 39c12-1 24-6 29-14-2 8-14 16-29 14z" fill="#d8cf3c" />
        </svg>
        <div>
          <WatermarkName>极光下载站</WatermarkName>
          <WatermarkSite>www.xz7.com</WatermarkSite>
        </div>
      </Watermark>
    </Window>
  );
}
